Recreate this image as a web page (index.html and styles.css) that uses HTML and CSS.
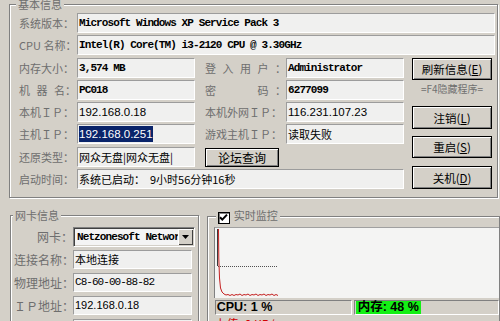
FILE: index.html
```html
<!DOCTYPE html>
<html>
  <head>
    <title>系统信息</title>
    <link rel="stylesheet" href="styles.css">
  </head>
  <body>
    <fieldset class="group basic">
      <legend>基本信息</legend>
      <div class="basic-grid">
        <span class="lbl">系统版本：</span>
        <div class="field mono wide">Microsoft Windows XP Service Pack 3</div>

        <span class="lbl">CPU 名称：</span>
        <div class="field mono wide">Intel(R) Core(TM) i3-2120 CPU @ 3.30GHz</div>

        <span class="lbl">内存大小：</span>
        <div class="field mono">3,574 MB</div>
        <span class="lbl2"><span class="spaced">登入用户</span>：</span>
        <div class="field mono">Administrator</div>

        <span class="lbl"><span class="spaced">机器</span>名：</span>
        <div class="field mono">PC018</div>
        <span class="lbl2"><span class="spaced">密　　码</span>：</span>
        <div class="field mono">6277099</div>

        <span class="lbl">本机ＩＰ：</span>
        <div class="field ip">192.168.0.18</div>
        <span class="lbl2">本机外网ＩＰ：</span>
        <div class="field ip">116.231.107.23</div>

        <span class="lbl">主机ＩＰ：</span>
        <div class="field ip"><span class="sel">192.168.0.251</span></div>
        <span class="lbl2">游戏主机ＩＰ：</span>
        <div class="field">读取失败</div>

        <span class="lbl">还原类型：</span>
        <div class="field">网众无盘|网众无盘|</div>
        <button class="btn btn-forum">论坛查询</button>

        <span class="lbl">启动时间：</span>
        <div class="field span3">系统已启动：&nbsp; 9小时56分钟16秒</div>

        <!-- right hand command buttons -->
        <div class="actions">
          <button class="btn">刷新信息(<u>E</u>)</button>
          <span class="hint">=F4隐藏程序=</span>
          <button class="btn btn-logoff">注销(<u>L</u>)</button>
          <button class="btn btn-reboot">重启(<u>S</u>)</button>
          <button class="btn btn-halt">关机(<u>D</u>)</button>
        </div>
      </div>
    </fieldset>

    <div class="lower">
      <fieldset class="group nic">
        <legend>网卡信息</legend>
        <div class="nic-grid">
          <span class="lbl3">网卡：</span>
          <div class="combo">
            <span class="combo-text mono">Netzonesoft Network Adapter</span>
            <span class="drop">
              <svg width="7" height="4" viewBox="0 0 7 4"><path d="M0 0H7L3.5 4Z" fill="#000"/></svg>
            </span>
          </div>

          <span class="lbl3">连接名称：</span>
          <div class="field">本地连接</div>

          <span class="lbl3">物理地址：</span>
          <div class="field mono-thin">C8-60-00-88-82</div>

          <span class="lbl3">ＩＰ地址：</span>
          <div class="field ip small">192.168.0.18</div>

          <span class="lbl3">子网掩码：</span>
          <div class="field ip small">255.255.255.0</div>
        </div>
      </fieldset>

      <fieldset class="group monitor">
        <legend>
          <span class="check">
            <svg width="9" height="9" viewBox="0 0 9 9"><path d="M1 4.2L3.3 6.6L8 1.6" fill="none" stroke="#000" stroke-width="2"/></svg>
          </span>实时监控
        </legend>
        <div class="graph">
          <svg width="282" height="69" viewBox="0 0 282 69">
            <path d="M2.5 1V38" stroke="#3a3a3a" stroke-width="1"/>
            <path d="M3 38.5H63" stroke="#505050" stroke-width="1" stroke-dasharray="1 1"/>
            <path d="M3.5 1L3.8 30L4.5 50L5.5 60L7 64L9 66L11 67L13 66.5L15 67.5L17 66.5L19 67.5L21 66.5L23 67L25 66L27 67.5L29 66.5L31 67L33 66L35 67.5L37 66.5L39 67L41 66L43 67.5L45 66.5L47 67L49 66L51 67.5L53 66.5L55 67L57 66L59 67.5L61 66.5L63 67.5" fill="none" stroke="#c42020" stroke-width="1"/>
          </svg>
        </div>
        <div class="stats">
          <div class="stat stat-cpu">CPU: 1 %</div>
          <div class="stat"><span class="mem">内存: 48 %</span></div>
        </div>
        <div class="net">上传: 0 KB/s</div>
      </fieldset>
    </div>
  </body>
</html>
```

FILE: styles.css
```css
/* classic windows look */
body {
  margin: 0;
  width: 500px;
  height: 321px;
  overflow: hidden;
  background-color: #d4d0c8;
  font-family: "Noto Sans CJK SC", sans-serif;
  font-size: 11px;
  color: #000000;
}

.group {
  margin: 0;
  padding: 0;
  min-width: 0;
  box-sizing: border-box;
  border: 1px solid #808080;
  box-shadow: inset 1px 1px #ffffff, 1px 1px #ffffff;
}

.group legend {
  padding: 0 2px;
  line-height: 12px;
  color: #6e6e6e;
  background-color: #d4d0c8;
}

/* top box */
.basic {
  margin: -2px 0 0 9px;
  width: 489px;
  padding: 3px 0 8px 9px;
}

.basic legend {
  margin-left: -3px;
}

.basic-grid {
  display: grid;
  grid-template-columns: 58px 118px 91px 118px 91px;
  grid-template-rows: repeat(8, 20px);
  row-gap: 2.3px;
}

.lbl {
  grid-column: 1;
  line-height: 20px;
  color: #6e6e6e;
  white-space: nowrap;
}

.lbl2 {
  padding-left: 10px;
  line-height: 20px;
  color: #6e6e6e;
  white-space: nowrap;
}

.spaced {
  letter-spacing: 6.5px;
}

.field {
  box-sizing: border-box;
  height: 20px;
  padding-left: 1px;
  line-height: 18px;
  white-space: nowrap;
  overflow: hidden;
  background-color: #f0f0ef;
  border: 1px solid;
  border-color: #9c9c9c #ffffff #ffffff #9c9c9c;
}

.wide {
  grid-column: 2 / 6;
}

.span3 {
  grid-column: 2 / 5;
}

.mono {
  font-family: "Liberation Mono", monospace;
  font-weight: bold;
  letter-spacing: -0.9px;
}

.mono-thin {
  font-family: "Liberation Mono", monospace;
  letter-spacing: -0.95px;
}

.ip {
  font-family: "Liberation Sans", sans-serif;
  font-size: 11.5px;
}

.ip.small {
  font-size: 11px;
}

.sel {
  background-color: #0a246a;
  color: #ffffff;
  padding: 2px 0;
}

.btn {
  box-sizing: border-box;
  width: 80px;
  height: 23px;
  padding: 0;
  font-family: "Noto Sans CJK SC", sans-serif;
  font-size: 11.5px;
  color: #000000;
  background-color: #d4d0c8;
  border: 1px solid #000000;
  box-shadow: inset 1px 1px #ffffff, inset -1px -1px #808080;
}

.btn-forum {
  width: 74px;
  height: 19px;
  margin: 1px 0 0 10px;
  align-self: start;
  font-size: 12px;
  line-height: 15px;
}

.actions {
  grid-column: 5;
  grid-row: 3 / 9;
  display: flex;
  flex-direction: column;
  padding-left: 8px;
}

.hint {
  width: 80px;
  margin-top: 2px;
  font-size: 10px;
  line-height: 14px;
  text-align: center;
  color: #707070;
}

.btn-logoff {
  margin-top: 10px;
}

.btn-reboot {
  margin-top: 7px;
}

.btn-halt {
  margin-top: 8px;
}

/* lower boxes */
.lower {
  display: flex;
  align-items: flex-start;
  margin-top: 11px;
}

.nic {
  margin-left: 10px;
  width: 193px;
  height: 150px;
  padding: 6px 0 0 3px;
}

.nic legend {
  margin-left: -1px;
}

.nic-grid {
  display: grid;
  grid-template-columns: 59px 122px;
  grid-auto-rows: 20px;
  row-gap: 3px;
}

.lbl3 {
  font-size: 12px;
  line-height: 20px;
  text-align: right;
  color: #6e6e6e;
  white-space: nowrap;
}

.nic-grid .field {
  width: 119px;
  height: 19px;
  line-height: 17px;
}

.combo {
  box-sizing: border-box;
  display: flex;
  height: 20px;
  padding: 1px;
  background-color: #f4f4f4;
  border: 1px solid;
  border-color: #808080 #ffffff #ffffff #808080;
  box-shadow: inset 1px 1px #404040, inset -1px -1px #d4d0c8;
}

.combo-text {
  flex: 1;
  overflow: hidden;
  white-space: nowrap;
  padding-left: 2px;
  line-height: 16px;
}

.drop {
  display: flex;
  align-items: center;
  justify-content: center;
  width: 15px;
  background-color: #d4d0c8;
  box-shadow: inset 1px 1px #ffffff, inset -1px -1px #404040;
}

.monitor {
  margin-left: 8px;
  width: 300px;
  height: 150px;
  padding: 3px 0 0 6px;
}

.monitor legend {
  margin-left: 2px;
  line-height: 13px;
}

.check {
  display: inline-flex;
  align-items: center;
  justify-content: center;
  box-sizing: border-box;
  width: 12px;
  height: 12px;
  margin-right: 4px;
  vertical-align: -2px;
  background-color: #ffffff;
  border: 1px solid #000000;
  box-shadow: inset 1px 1px #808080;
}

.graph {
  box-sizing: border-box;
  height: 71px;
  background-color: #f4f4f3;
  border-top: 1px solid #a0a0a0;
  border-left: 1px solid #808080;
}

.graph svg {
  display: block;
}

.stats {
  display: flex;
  gap: 2px;
  height: 15px;
  margin: 2px 0 0 1px;
}

.stat {
  box-sizing: border-box;
  flex: 1;
  padding-left: 1px;
  font-family: "Liberation Sans", "Noto Sans CJK SC", sans-serif;
  font-weight: bold;
  font-size: 12.5px;
  line-height: 13px;
  border: 1px solid;
  border-color: #808080 #ffffff #ffffff #808080;
}

.stat-cpu {
  flex: none;
  width: 137px;
}

.mem {
  display: inline-block;
  padding: 0 2px;
  background-color: #14f014;
}

.net {
  margin: 2px 0 0 1px;
  font-size: 12px;
  line-height: 14px;
  color: #d00000;
}
```
